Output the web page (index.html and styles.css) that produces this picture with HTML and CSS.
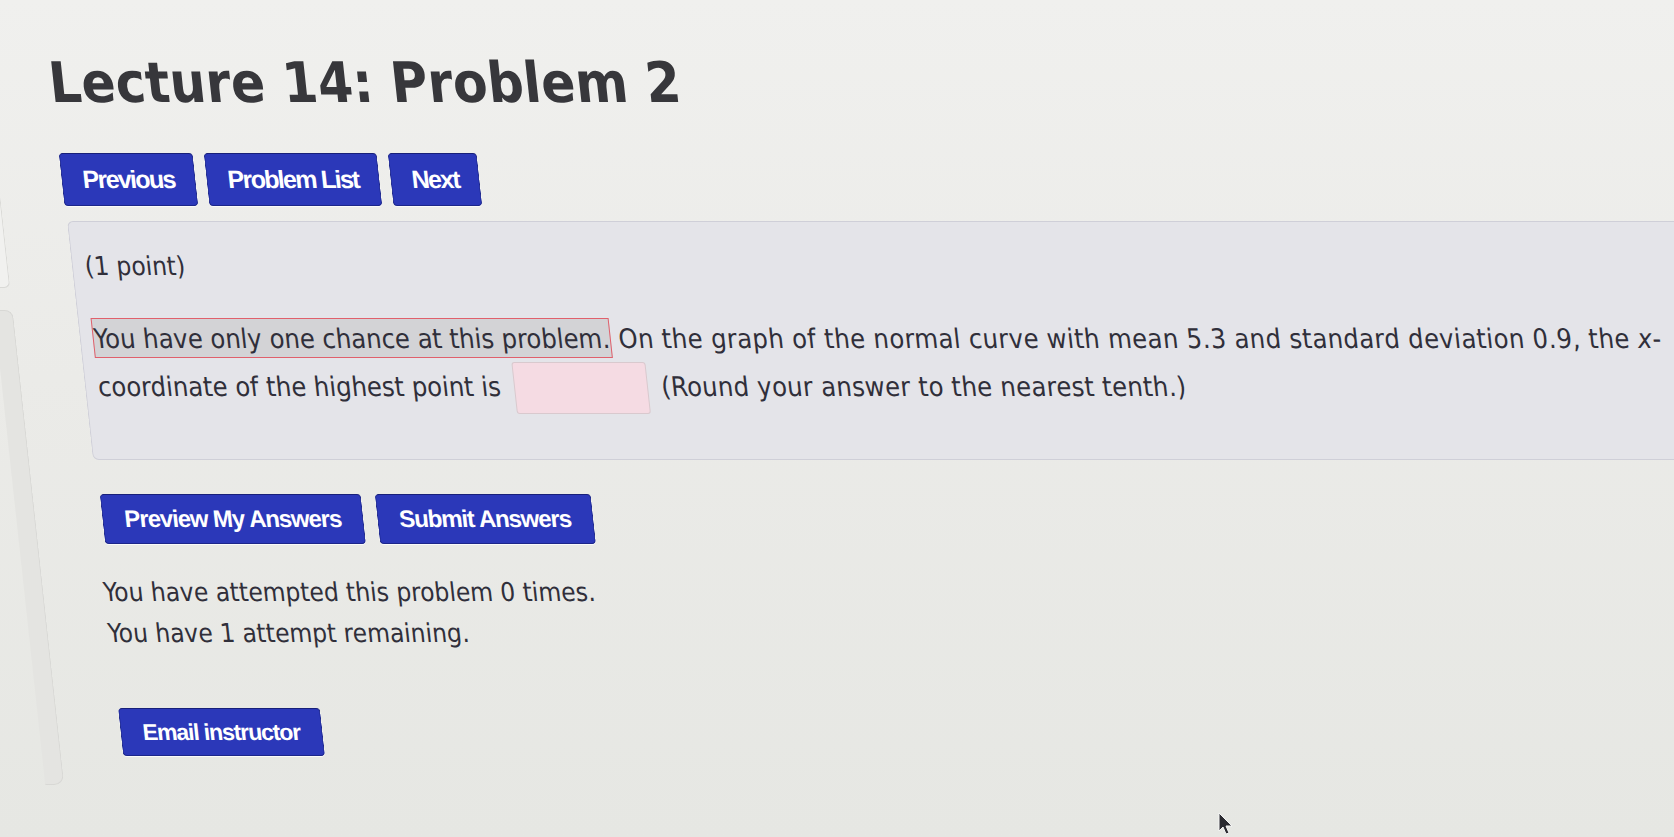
FILE: index.html
```html
<!DOCTYPE html>
<html lang="en">
<head>
<meta charset="utf-8">
<title>Lecture 14: Problem 2</title>
<link rel="stylesheet" href="styles.css">
</head>
<body>
<div class="page">
  <aside class="side">
    <div class="side-top"></div>
    <div class="side-panel"></div>
  </aside>
  <main class="content">
    <h1 class="title">Lecture 14: Problem 2</h1>
    <nav class="navbtns">
      <button class="btn btn-nav">Previous</button>
      <button class="btn btn-nav">Problem List</button>
      <button class="btn btn-nav">Next</button>
    </nav>
    <section class="problem">
      <p class="points">(1 point)</p>
      <p class="qtext"><span class="warn">You have only one chance at this problem.</span> <span class="rest rest-wide">On the graph of the normal curve with mean 5.3 and standard deviation 0.9, the <i>x</i>-</span><br>coordinate of the highest point is <span class="answer"></span> <span class="rest">(Round your answer to the nearest tenth.)</span></p>
    </section>
    <div class="actions">
      <button class="btn btn-act">Preview My Answers</button>
      <button class="btn btn-act">Submit Answers</button>
    </div>
    <div class="attempts">
      <p class="att1">You have attempted this problem 0 times.</p>
      <p class="att2">You have 1 attempt remaining.</p>
    </div>
    <div class="email">
      <button class="btn btn-email">Email instructor</button>
    </div>
  </main>
</div>
<svg class="cursor" width="16" height="24" viewBox="0 0 16 24"><path d="M1 1 L1 19 L5 15 L8 22 L11 21 L8 14 L14 14 Z" fill="#2a2a30" stroke="#f4f4f4" stroke-width="1"/></svg>
</body>
</html>
```
FILE: styles.css
```css
html, body {
  margin: 0;
  padding: 0;
  height: 100%;
}
body {
  overflow: hidden;
  background: linear-gradient(180deg, #f0f0ee 0%, #ebebe8 45%, #e6e7e3 100%);
  font-family: "DejaVu Sans Condensed", "DejaVu Sans", sans-serif;
  font-stretch: condensed;
  color: #302f3a;
  position: relative;
}
.page {
  display: flex;
  margin-left: -40px;
  height: 837px;
  transform: skewX(6.2deg);
  transform-origin: 0 0;
}
.side {
  width: 19px;
  flex-shrink: 0;
  display: flex;
  flex-direction: column;
}
.side-top {
  height: 288px;
  background: #f1f1ef;
  border-right: 1px solid #d9d9d6;
  border-bottom: 1px solid #d9d9d6;
  border-radius: 0 0 6px 0;
  box-sizing: border-box;
}
.side-panel {
  margin-top: 22px;
  height: 475px;
  background: #e4e4e1;
  border: 1px solid #d8d8d5;
  border-left: none;
  border-radius: 0 8px 10px 0;
  box-sizing: border-box;
}
.content {
  flex: 1;
  padding-left: 61px;
  min-width: 0;
}
.title {
  margin: 50px 0 0 0;
  font-size: 56px;
  line-height: 66px;
  font-weight: bold;
  color: #37373b;
  letter-spacing: 0.1px;
}
.navbtns {
  display: flex;
  gap: 11px;
  margin: 37px 0 0 2px;
}
.btn {
  font-family: "Liberation Sans", Arial, sans-serif;
  font-stretch: normal;
  font-weight: bold;
  color: #ffffff;
  background: #2b38b9;
  border: 1px solid #1c268a;
  border-top-color: #18207a;
  border-radius: 4px;
  letter-spacing: -1.1px;
  padding: 0 21px;
  box-shadow: 0 1px 0 #fafafa;
}
.btn-nav {
  height: 53px;
  font-size: 25px;
  letter-spacing: -1.7px;
  padding: 0 20px;
}
.problem {
  margin: 15px 0 0 3px;
  background: #e4e4e9;
  border: 1px solid #cfcfd8;
  border-right: none;
  border-radius: 6px 0 0 6px;
  padding: 21px 0 45px 12px;
}
.points {
  margin: 0;
  font-size: 26px;
  line-height: 46px;
}
.qtext {
  margin: 27px 0 0 0;
  font-size: 27px;
  line-height: 46px;
  white-space: nowrap;
}
.rest {
  letter-spacing: 0.3px;
}
.rest-wide {
  letter-spacing: 0.38px;
}
.warn {
  background: #d3d3d6;
  border: 1.5px solid #e0606c;
  padding: 4px 0 3px 0;
}
.answer {
  display: inline-block;
  width: 132px;
  height: 50px;
  vertical-align: middle;
  background: #f5dbe3;
  border: 1px solid #d9c9ce;
  border-radius: 3px;
  margin: 0 6px 0 5px;
}
.actions {
  display: flex;
  gap: 14px;
  margin: 34px 0 0 6px;
}
.btn-act {
  height: 50px;
  font-size: 24px;
}
.attempts {
  margin: 28px 0 0 -1px;
  font-size: 26px;
  line-height: 41px;
}
.attempts p {
  margin: 0;
}
.email {
  margin: 54px 0 0 1px;
}
.btn-email {
  height: 48px;
  font-size: 23px;
}
.cursor {
  position: absolute;
  left: 1218px;
  top: 812px;
}
```
